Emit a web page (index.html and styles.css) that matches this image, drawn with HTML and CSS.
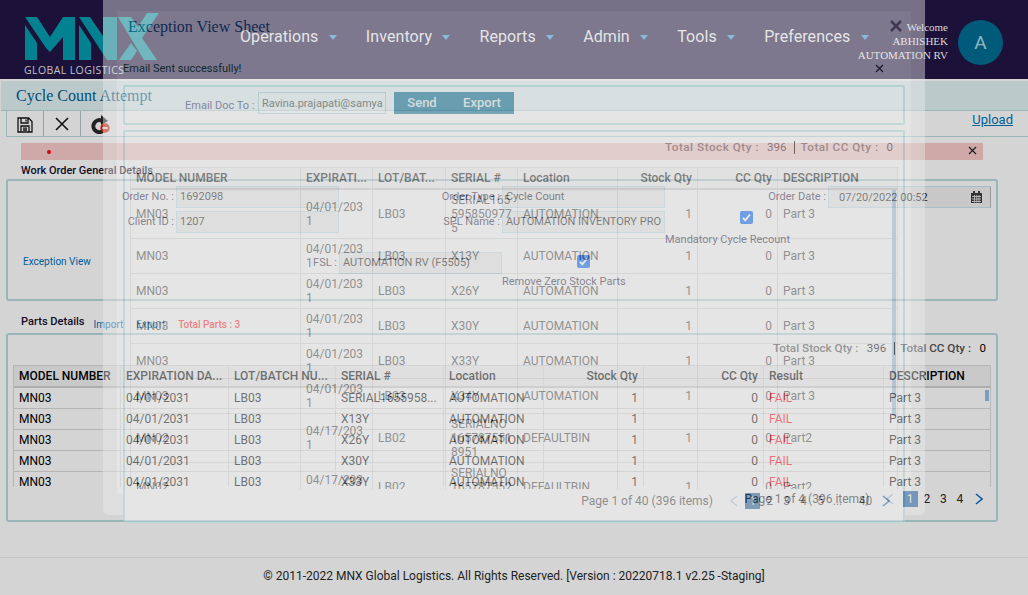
FILE: index.html
```html
<!DOCTYPE html>
<html lang="en">
<head>
<meta charset="utf-8">
<title>Cycle Count Attempt</title>
<link rel="stylesheet" href="styles.css">
</head>
<body>
<header class="top">
  <svg class="logo" viewBox="0 0 135 48" width="135" height="48"><path d="M0 4H12L25 24 38 4H50V47H38V24L25 39 21 35ZM0 12L12 30V47H0ZM54 4H65L78 23V4H92V47H82ZM54 12L66 30V47H54ZM93 4H106L113 14 122 0H134L117 25 132 47H119ZM94 47L106 30 112 38 106 47Z"/></svg>
  <div class="tagline"><span>GLOBAL LOGISTICS</span></div>
  <nav class="nav">
    <a>Operations<i></i></a><a>Inventory<i></i></a><a>Reports<i></i></a><a>Admin<i></i></a><a>Tools<i></i></a><a>Preferences<i></i></a>
  </nav>
  <div class="welcome">Welcome<br>ABHISHEK<br>AUTOMATION RV</div>
  <div class="avatar">A</div>
</header>
<div class="titlebar"><span>Cycle Count Attempt</span></div>
<div class="toolbar">
  <div class="tool"><svg width="16" height="16" viewBox="0 0 16 16"><path d="M1 1H11.5L15 4.5V15H1ZM4 1V6H11V1M4 15V9H12V15M6 11.2H10M6 13H10M9 2.5V4.5" fill="none" stroke="#111" stroke-width="1.300"/></svg></div>
  <div class="tool"><svg width="14" height="14" viewBox="0 0 14 14"><path d="M1 1L13 13M13 1L1 13" stroke="#111" stroke-width="1.6"/></svg></div>
  <div class="tool last"><svg width="20" height="19" viewBox="0 0 20 19"><path d="M13 15A6 6 0 1 1 10.500 5.500" fill="none" stroke="#222" stroke-width="4"/><path d="M10 0L17 6 10 10Z" fill="#222"/><circle cx="14" cy="13" r="4.700" fill="#b8200f"/><path d="M11.300 13H16.700" stroke="#ddd" stroke-width="1.800"/></svg></div>
  <a class="upload">Upload</a>
</div>
<div class="alert"><b></b><svg width="9" height="9" viewBox="0 0 9 9"><path d="M1 1L8 8M8 1L1 8" stroke="#222" stroke-width="1.300"/></svg></div>
<h3 class="section"><span class="w-head">Work Order General Details</span></h3>
<section class="panel order">
  <div class="line">
    <label class="l1">Order No. :</label><div class="field">1692098</div>
    <label class="l2">Order Type :</label><div class="field">Cycle Count</div>
    <label class="l2">Order Date :</label><div class="field date"><span>07/20/2022 00:52</span><svg width="11" height="12" viewBox="0 0 11 12"><path d="M0 2H11V12H0Z" fill="#333"/><path d="M1 5.500H10M1 8H10M1 10.500H10M3.500 4V11.500M5.800 4V11.500M8 4V11.500" stroke="#ccc" stroke-width=".8"/><path d="M3 0V3M8 0V3" stroke="#333" stroke-width="2"/></svg></div>
  </div>
  <div class="line second">
    <label class="l1">Client ID :</label><div class="field">1207</div>
    <label class="l2">SPL Name :</label><div class="field clip">AUTOMATION INVENTORY PRO</div>
    <div class="check"><svg width="13" height="13" viewBox="0 0 13 13"><rect width="13" height="13" rx="2" fill="#0055d0"/><path d="M3 6.800L5.300 9.300 10 3.500" fill="none" stroke="#ddd" stroke-width="1.900"/></svg><span>Mandatory Cycle Recount</span></div>
  </div>
  <div class="line third">
    <a class="exc">Exception View</a><label class="l3">FSL :</label><div class="field">AUTOMATION RV (F5505)</div>
    <div class="check"><svg width="13" height="13" viewBox="0 0 13 13"><rect width="13" height="13" rx="2" fill="#0055d0"/><path d="M3 6.800L5.300 9.300 10 3.500" fill="none" stroke="#ddd" stroke-width="1.900"/></svg><span>Remove Zero Stock Parts</span></div>
  </div>
</section>
<div class="section parts-head"><h3>Parts Details</h3><a class="imp">Import</a><a class="exp">Export</a><b>Total Parts : 3</b></div>
<section class="panel parts">
  <div class="totals"><b>Total Stock Qty :</b><span>396</span><i></i><b>Total CC Qty :</b><span>0</span></div>
  <div class="gridwrap">
    <div class="grid head"><div>MODEL NUMBER</div><div>EXPIRATION DA...</div><div>LOT/BATCH NU...</div><div>SERIAL #</div><div>Location</div><div class="r">Stock Qty</div><div class="r">CC Qty</div><div>Result</div><div>DESCRIPTION</div></div>
    <div class="grid"><div>MN03</div><div>04/01/2031</div><div>LB03</div><div>SERIAL1655958...</div><div>AUTOMATION</div><div class="r">1</div><div class="r">0</div><div class="fail">FAIL</div><div class="knob">Part 3</div></div>
    <div class="grid"><div>MN03</div><div>04/01/2031</div><div>LB03</div><div>X13Y</div><div>AUTOMATION</div><div class="r">1</div><div class="r">0</div><div class="fail">FAIL</div><div>Part 3</div></div>
    <div class="grid"><div>MN03</div><div>04/01/2031</div><div>LB03</div><div>X26Y</div><div>AUTOMATION</div><div class="r">1</div><div class="r">0</div><div class="fail">FAIL</div><div>Part 3</div></div>
    <div class="grid"><div>MN03</div><div>04/01/2031</div><div>LB03</div><div>X30Y</div><div>AUTOMATION</div><div class="r">1</div><div class="r">0</div><div class="fail">FAIL</div><div>Part 3</div></div>
    <div class="grid"><div>MN03</div><div>04/01/2031</div><div>LB03</div><div>X33Y</div><div>AUTOMATION</div><div class="r">1</div><div class="r">0</div><div class="fail">FAIL</div><div>Part 3</div></div>
  </div>
  <div class="pager base-pager"><span class="info">Page 1 of 4 (396 items)</span><span class="arr dim"><svg width="8" height="12" viewBox="0 0 8 12"><path d="M7 1L1 6 7 11"/></svg></span><span class="cur">1</span><span>2</span><span>3</span><span>4</span><span class="arr"><svg width="8" height="12" viewBox="0 0 8 12"><path d="M1 1L7 6 1 11"/></svg></span></div>
</section>
<footer>© 2011-2022 MNX Global Logistics. All Rights Reserved. [Version : 20220718.1 v2.25 -Staging]</footer>

<div class="modal">
  <div class="frame">
    <div class="sheet">
      <div class="mhead"><span>Exception View Sheet</span><svg width="12" height="12" viewBox="0 0 12 12"><path d="M1 1L11 11M11 1L1 11" stroke="#6f6a78" stroke-width="2.600"/></svg></div>
      <div class="sent"><span>Email Sent successfully!</span><svg width="9" height="9" viewBox="0 0 9 9"><path d="M1 1L8 8M8 1L1 8" stroke="#222" stroke-width="1.300"/></svg></div>
      <div class="mpanel mail"><label>Email Doc To :</label><div class="mailbox">Ravina.prajapati@samya</div><div class="btns"><button>Send</button><button>Export</button></div></div>
      <div class="mpanel list">
        <div class="totals mt"><b>Total Stock Qty :</b><span>396</span><i></i><b>Total CC Qty :</b><span>0</span></div>
        <div class="mgridwrap">
          <div class="mgrid head"><div>MODEL NUMBER</div><div>EXPIRATI...</div><div>LOT/BAT...</div><div>SERIAL #</div><div>Location</div><div class="r">Stock Qty</div><div class="r">CC Qty</div><div>DESCRIPTION</div></div>
          <div class="mgrid tall"><div>MN03</div><div>04/01/203<br>1</div><div>LB03</div><div>SERIAL165<br>595850977<br>5</div><div>AUTOMATION</div><div class="r">1</div><div class="r">0</div><div>Part 3</div></div>
          <div class="mgrid"><div>MN03</div><div>04/01/203<br>1</div><div>LB03</div><div>X13Y</div><div>AUTOMATION</div><div class="r">1</div><div class="r">0</div><div>Part 3</div></div>
          <div class="mgrid"><div>MN03</div><div>04/01/203<br>1</div><div>LB03</div><div>X26Y</div><div>AUTOMATION</div><div class="r">1</div><div class="r">0</div><div>Part 3</div></div>
          <div class="mgrid"><div>MN03</div><div>04/01/203<br>1</div><div>LB03</div><div>X30Y</div><div>AUTOMATION</div><div class="r">1</div><div class="r">0</div><div>Part 3</div></div>
          <div class="mgrid"><div>MN03</div><div>04/01/203<br>1</div><div>LB03</div><div>X33Y</div><div>AUTOMATION</div><div class="r">1</div><div class="r">0</div><div>Part 3</div></div>
          <div class="mgrid"><div>MN03</div><div>04/01/203<br>1</div><div>LB03</div><div>X34Y</div><div>AUTOMATION</div><div class="r">1</div><div class="r">0</div><div>Part 3</div></div>
          <div class="mgrid tall"><div>MN02</div><div>04/17/203<br>1</div><div>LB02</div><div>SERIALNO<br>165787551<br>8951</div><div>DEFAULTBIN</div><div class="r">1</div><div class="r">0</div><div>Part2</div></div>
          <div class="mgrid tall"><div>MN02</div><div>04/17/203</div><div>LB02</div><div>SERIALNO<br>165787552<br>8951</div><div>DEFAULTBIN</div><div class="r">1</div><div class="r">0</div><div>Part2</div></div>
          <div class="scroll"></div>
        </div>
        <div class="pager mpager"><span class="info">Page 1 of 40 (396 items)</span><span class="arr dim"><svg width="8" height="12" viewBox="0 0 8 12"><path d="M7 1L1 6 7 11"/></svg></span><span class="cur">1</span><span>2</span><span>3</span><span>4</span><span>5</span><span>...</span><span class="last">40</span><span class="arr"><svg width="8" height="12" viewBox="0 0 8 12"><path d="M1 1L7 6 1 11"/></svg></span></div>
      </div>
    </div>
  </div>
</div>
</body>
</html>
```

FILE: styles.css
```css
* { box-sizing: border-box; }
body { margin: 0; width: 1028px; height: 595px; overflow: hidden; background: #d4d4d4; font-family: Roboto, sans-serif; font-size: 12px; line-height: 14px; color: #000; position: relative; }
h3 { margin: 0; font-size: 11.100px; font-weight: 500; }

.top { height: 79px; background: #1b1139; display: grid; grid-template-columns: 240px 618px 90px 80px; }
.logo { grid-area: 1 / 1; margin: 13px 0 0 24.500px; fill: #028291; }
.tagline { grid-area: 1 / 1; margin: 63px 0 0 24px; font: 10.500px/14px "Open Sans", sans-serif; letter-spacing: .4px; color: #c3c1cb; white-space: nowrap; }
.nav { grid-area: 1 / 2; display: flex; padding-top: 26px; font-size: 16px; line-height: 21px; color: #d6d6d6; }
.nav a { display: flex; margin-right: 29px; letter-spacing: .08px; white-space: nowrap; }
.nav i { margin: 9px 0 0 10.400px; border: 5px solid transparent; border-left-width: 4.500px; border-right-width: 4.500px; border-top-color: #2a86bd; border-bottom: 0; height: 0; }
.welcome { grid-area: 1 / 3; justify-self: end; padding-top: 20px; font: 11px/14px "Liberation Serif", serif; color: #d9d9d9; text-align: right; white-space: nowrap; }
.avatar { grid-area: 1 / 4; width: 45px; height: 45px; margin: 20px 0 0 10px; border-radius: 50%; background: #005a7a; color: #93b6c5; font-size: 19px; line-height: 45px; text-align: center; }

.titlebar { margin: 2px 0 0 1px; height: 30px; background: #bbc9ca; border-bottom: 1px solid #98b5b8; font: 16px/29px "Liberation Serif", serif; color: #004e74; padding-left: 15px; }
.toolbar { margin-left: 6px; height: 26px; border-bottom: 1px solid #98b5b8; border-left: 1px solid #98b5b8; display: flex; }
.tool { width: 37px; border-right: 1px solid #9aa3a5; display: flex; align-items: center; justify-content: center; padding: 3px 0 0 0; }
.tool + .tool { padding-top: 1px; }
.tool.last { border: 0; padding: 1px 0 0 2px; }
.tool svg { flex: none; }
.upload { margin: 1px 15px 0 auto; font-size: 13px; line-height: 15px; color: #006096; text-decoration: underline; }
.alert { margin: 6px 0 0 21px; width: 962px; height: 17px; background: #cfa8a8; display: flex; align-items: center; justify-content: space-between; padding: 0 6px 2px 26px; }
.alert b { width: 4px; height: 4px; border-radius: 50%; background: #d0021b; margin-top: 2px; }
.section { padding-left: 21px; height: 19px; line-height: 21px; color: #120a26; }
.w-head { font-size: 10.950px; }
.panel { margin-left: 6px; width: 992px; border: 2px solid #98b5b8; border-radius: 3px; }

.order { height: 122px; padding-top: 5px; font-size: 11px; color: #2b2440; }
.line { display: flex; height: 25px; }
.l1, .l2, .l3 { text-align: right; padding-right: 2px; line-height: 21px; white-space: nowrap; }
.l1 { width: 168px; }
.l2 { width: 163px; }
.l3 { width: 240px; }
.field { width: 163px; height: 22px; border: 1px solid #a3bec8; background: #c8c8c8; line-height: 19px; padding-left: 3px; color: #151515; white-space: nowrap; overflow: hidden; }
.date { display: flex; justify-content: space-between; padding: 0 8px 0 10px; border-right-color: #999; align-items: center; }
.third { margin-top: 16px; }
.exc { width: 91px; padding-left: 15px; font-size: 10px; line-height: 20px; color: #005d9c; white-space: nowrap; }
.check { width: 163px; display: flex; flex-direction: column; align-items: center; white-space: nowrap; gap: 15px; padding-top: 1px; }
.check svg { flex: none; margin-top: 2px; }
.check span { align-self: flex-start; line-height: 12px; margin-top: -7px; }
.second .check { gap: 17px; padding-top: 0; margin-top: -2px; }

.parts-head { display: flex; height: 32px; padding-top: 11px; line-height: 20px; }
.imp { margin-left: 9px; font-size: 10px; color: #005d9c; line-height: 25px; }
.exp { margin-left: 13px; font-size: 10px; color: #005d9c; line-height: 25px; }
.parts-head b { margin-left: 13px; font-size: 10px; font-weight: 500; color: #e02020; line-height: 25px; }
.parts { height: 189px; padding: 0 5px; }
.totals { display: flex; justify-content: flex-end; align-items: center; height: 30px; padding: 0 5px 4px 0; }
.totals b { font-weight: 500; color: #444; font-size: 11.700px; }
.totals b + span { margin-left: 8.500px; font-size: 11.500px; }
.totals i { width: 1px; height: 13px; background: #000; margin: 0 5px 0 8px; }
.gridwrap { height: 122px; overflow: hidden; border-top: 1px solid #b5b5b5; border-left: 1px solid #b5b5b5; width: 978px; }
.grid { display: grid; grid-template-columns: 107px 108px 107px 108px 100px 100px 120px 120px 107px; height: 21px; border-bottom: 1px solid #b5b5b5; line-height: 21px; }
.grid > div { border-right: 1px solid #b8b8b8; padding-left: 5px; white-space: nowrap; }
.grid .r, .mgrid .r { text-align: right; padding-right: 5px; }
.head { font-weight: 500; }
.grid.head { background: #c9c9c9; height: 22px; border-bottom: 2px solid #adadad; line-height: 20px; }
.grid .fail { color: #e00012; }
.grid .knob { background: linear-gradient(#7b9dc0, #7b9dc0) no-repeat 101px 2px / 4px 11px; }
.pager { display: flex; align-items: center; justify-content: flex-end; }
.pager svg { fill: none; stroke: #0a56a0; stroke-width: 1.500; display: block; }
.pager .dim svg { stroke: #8ba3bd; }
.pager .cur { background: #195491; color: #ddd; }
.pager span { width: 16.500px; height: 16px; line-height: 16px; text-align: center; }
.pager .info { width: auto; }
.pager .arr { display: flex; align-items: center; justify-content: center; }
.base-pager { height: 24px; padding-right: 1px; color: #222; }
.base-pager .cur { width: 15px; margin-right: 1px; }
.base-pager .arr { width: 22px; }
.base-pager .dim { margin: 0 2px 0 9px; }
footer { margin-top: 35px; border-top: 1px solid #c4c4c4; text-align: center; line-height: 37px; color: #222; }

/* Exception sheet, shown mid-fade above the page */
.modal { position: absolute; left: 103px; top: 0; width: 822px; height: 515px; opacity: .44; }
.frame { height: 515px; background: #ececec; border-radius: 0 0 5px 5px; padding: 11px 14px 0; }
.sheet { height: 482px; background: #fcfcfc; }
.mhead { display: flex; justify-content: space-between; padding: 0 9px 0 11px; font: 16px/31px "Liberation Serif", serif; color: #004a6e; height: 46px; }
.mhead svg { margin-top: 9px; }
.sent { display: flex; justify-content: space-between; padding: 5px 27px 0 6px; font-size: 11px; color: #004a12; height: 28px; }
.sent svg { margin-top: 2px; }
.mpanel { margin-left: 6px; width: 782px; border: 2px solid #aedbe0; border-radius: 2px; }
.mail { height: 40px; display: flex; padding: 5px 0 0 60px; }
.mail label { font-size: 11px; line-height: 28px; color: #3a2c66; white-space: nowrap; width: 73px; }
.mailbox { width: 128px; height: 22px; border: 1px solid #a8d2da; padding: 0 2px 0 3px; line-height: 22px; font-size: 11px; white-space: nowrap; overflow: hidden; color: #333; }
.btns { display: flex; margin-left: 8px; width: 120px; height: 22px; background: #00688e; }
.btns button { width: 56px; border: 0; background: none; color: #f4f4f4; font: 500 13px/20px Roboto, sans-serif; padding: 0; }
.btns button + button { width: 64px; }
.list { margin-top: 5px; height: 393px; background: #fcfcfc; padding-left: 5px; }
.mt { padding-right: 10px; height: 35px; padding-bottom: 5px; }
.mt b { letter-spacing: .52px; color: #666; }
.mt b + span { margin-left: 8px; color: #333; }
.mt i { margin-left: 8px; }
.mgridwrap { width: 768px; height: 322px; overflow: hidden; border-top: 1px solid #dcdcdc; border-left: 1px solid #dcdcdc; position: relative; }
.mgrid { display: grid; grid-template-columns: 170px 72px 73px 72px 100px 80px 80px 120px; height: 35px; border-bottom: 1px solid #dadada; color: #3a3a3a; }
.mgrid > div { border-right: 1px solid #dadada; padding-left: 5px; white-space: nowrap; display: flex; align-items: center; }
.mgrid .r { justify-content: flex-end; }
.mgrid.tall { height: 49px; }
.mgrid.head { height: 22px; border-bottom: 2px solid #ccc; background: #f2f2f2; color: #111; }
.mgrid:nth-last-child(2) > div:nth-child(2) { padding-bottom: 14px; }
.scroll { position: absolute; right: 2px; top: 22px; width: 4px; height: 226px; background: #9dbedb; }
.mpager { height: 24px; padding-right: 5px; color: #333; }
.mpager span { width: 17px; }
.mpager .dim { margin-left: 10px; }
.mpager .dim svg { stroke: #b0c4d8; }
.mpager .info { margin-right: -1px; }
.mpager .last { margin-left: 11px; }
.mpager .arr { width: 24px; }
.mpager .arr.dim { width: 23px; }
.mpager .cur { width: 15px; margin-right: 1px; }
```
